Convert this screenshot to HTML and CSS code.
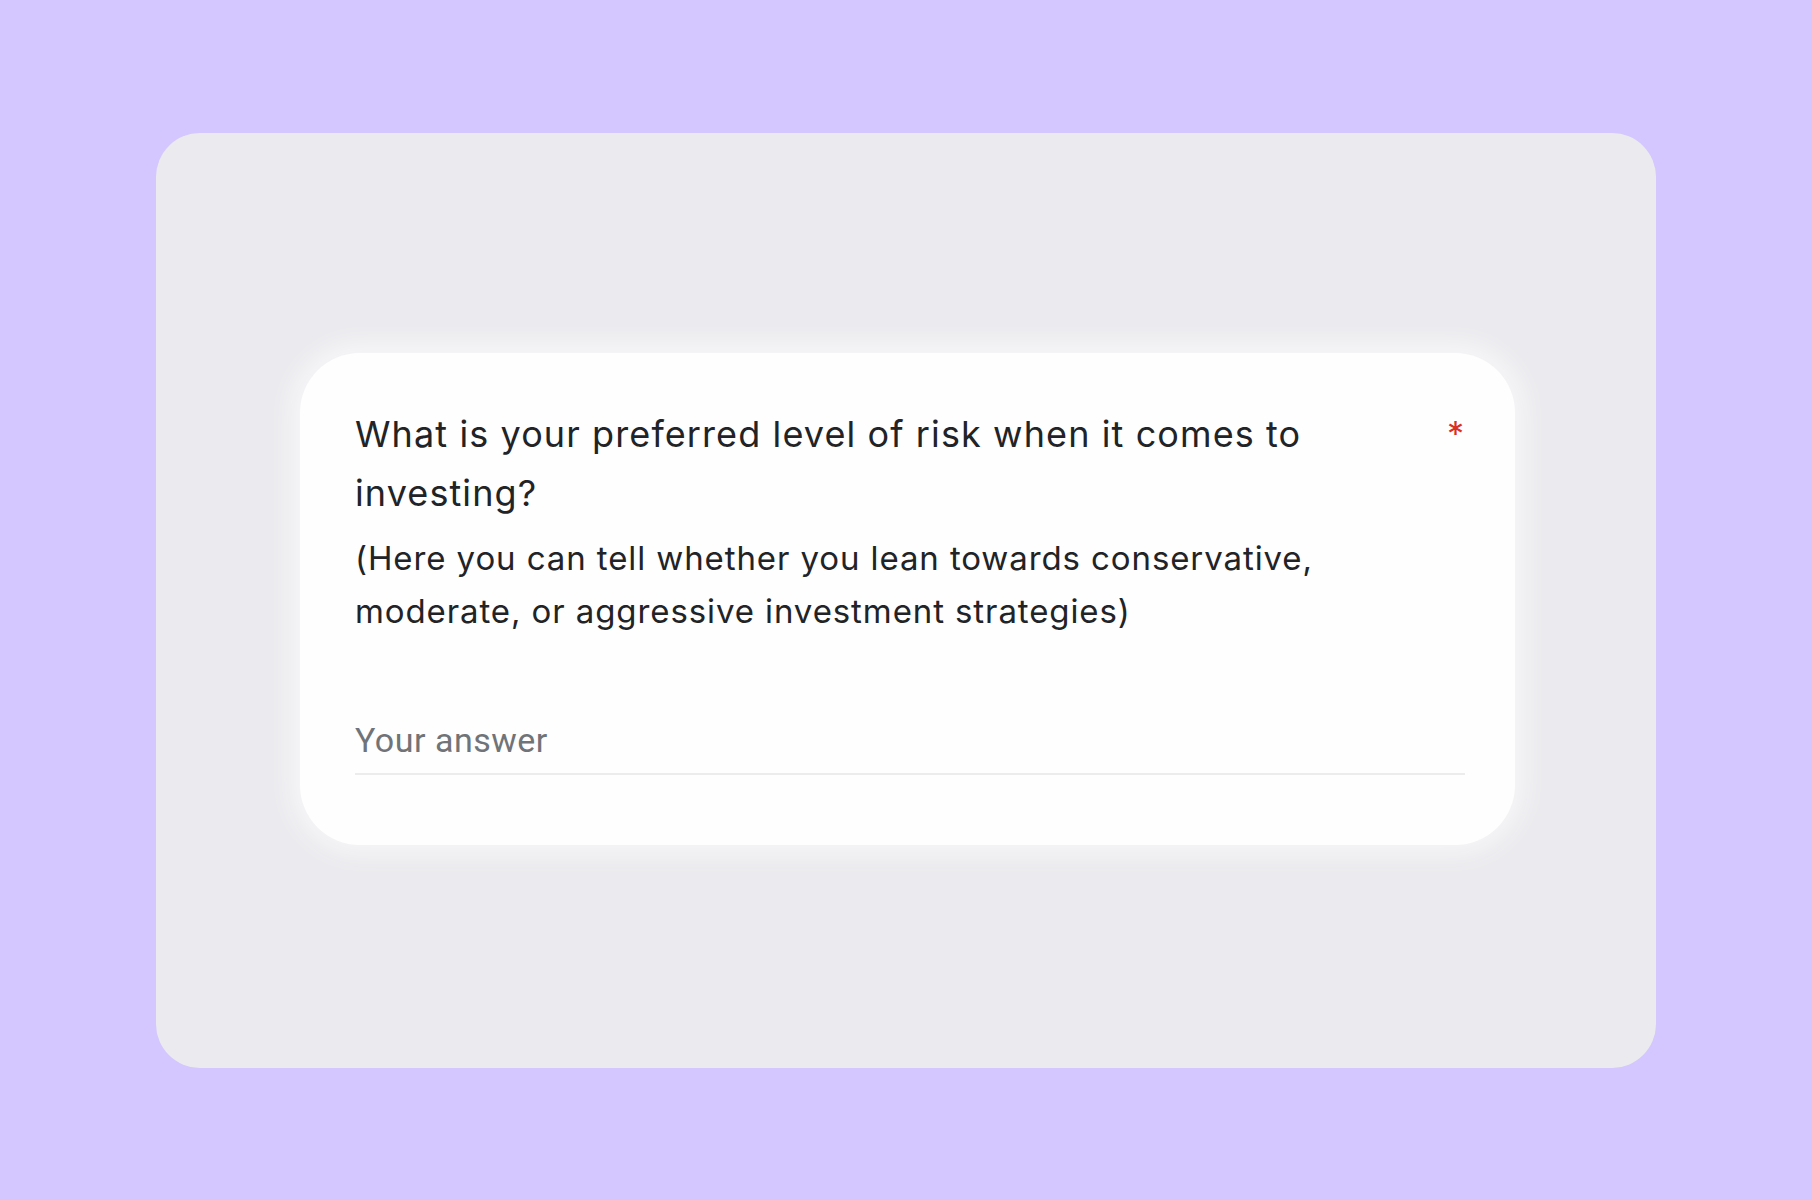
FILE: index.html
```html
<!DOCTYPE html>
<html>
<head>
    <title>Risk Question</title>
    <link rel="stylesheet" href="styles.css">
</head>
<body>
    <div class="panel">
        <div class="question-card">
            <div class="question-head">
                <div class="question-text">
                    <h2 class="question-title">What is your preferred level of risk when it comes to investing?</h2>
                    <p class="question-desc">(Here you can tell whether you lean towards conservative, moderate, or aggressive investment strategies)</p>
                </div>
                <span class="required">*</span>
            </div>

            <!-- Answer field -->
            <div class="answer">
                <input type="text" class="answer-input" placeholder="Your answer">
            </div>
        </div>
    </div>
</body>
</html>
```

FILE: styles.css
```css
body {
    margin: 0;
    background-color: #d4c6fe;
    font-family: 'Inter', 'Noto Sans', sans-serif;
    min-height: 100vh;
    padding-top: 133px;
    box-sizing: border-box;
}

.panel {
    width: 1500px;
    height: 935px;
    margin-left: 156px;
    box-sizing: border-box;
    padding: 220px 0 0 144px;
    background-color: #ebebef;
    border-radius: 44px;
}

.question-card {
    width: 1215px;
    height: 492px;
    box-sizing: border-box;
    padding: 52px 50px 0 55px;
    background-color: #fefefe;
    border-radius: 60px;
    box-shadow: 0 0 24px 10px rgba(255, 255, 255, 0.6), 0 10px 40px rgba(0, 0, 0, 0.015);
}

.question-head {
    display: flex;
    justify-content: space-between;
    align-items: flex-start;
}

.question-text {
    max-width: 1030px;
}

.question-title {
    margin: 0;
    font-size: 36px;
    font-weight: 400;
    letter-spacing: 1.1px;
    line-height: 59px;
    color: #222326;
}

.question-desc {
    margin: 9px 0 0;
    font-size: 33px;
    letter-spacing: 0.9px;
    line-height: 53px;
    color: #222326;
}

.required {
    color: #d93025;
    font-size: 34px;
    line-height: 1;
    margin-top: 12px;
    margin-right: 1px;
}

.answer {
    margin-top: 82px;
}

.answer-input {
    width: 100%;
    box-sizing: border-box;
    border: none;
    border-bottom: 2px solid #ececec;
    padding: 0 0 13px;
    background: transparent;
    font-family: 'Roboto', sans-serif;
    font-size: 34px;
    letter-spacing: 0.5px;
    color: #202124;
    outline: none;
}

.answer-input::placeholder {
    color: #707478;
}
```
